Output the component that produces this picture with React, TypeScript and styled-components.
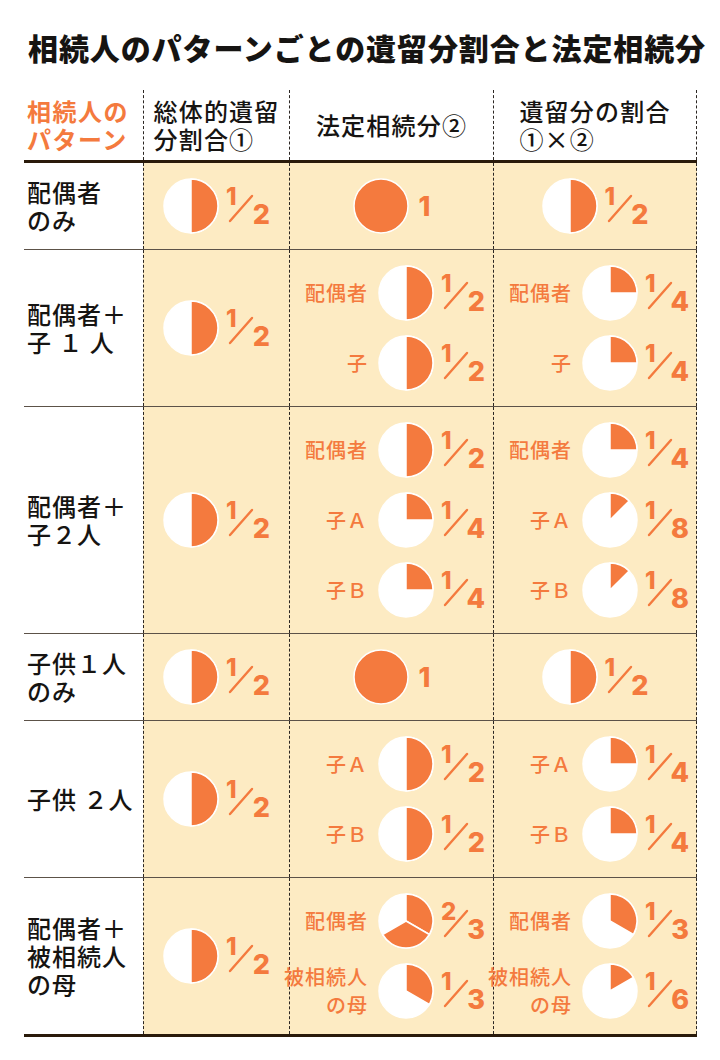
import styled, { createGlobalStyle } from "styled-components";

const ORANGE = "#f47a3e";
const CREAM = "#fdebc3";
const INK = "#161412";
const DASH = "1px dashed #2b2622";

const GlobalStyle = createGlobalStyle`
  body {
    margin: 0;
    background: #ffffff;
    color: ${INK};
    font-family: "Noto Sans CJK JP", "Noto Sans", sans-serif;
  }
`;

const Page = styled.div`
  width: 720px;
  box-sizing: border-box;
  padding: 29px 0 30px 24px;
`;

const Title = styled.h1`
  margin: 0 0 25px 4px;
  font-size: 30px;
  font-weight: 900;
  line-height: 36px;
  letter-spacing: 0.9px;
  white-space: nowrap;
`;

const Table = styled.div`
  width: 673px;
`;

const Row = styled.div<{ $heavy?: boolean }>`
  display: grid;
  grid-template-columns: 119px 146px 204px 204px;
  border-bottom: ${(p) => (p.$heavy ? "3px solid #2a1a0a" : "1px solid #5c5248")};
`;

const NameCell = styled.div`
  display: flex;
  align-items: center;
  padding-left: 3px;
  font-size: 24px;
  line-height: 28px;
  font-weight: 500;
  letter-spacing: 1px;
  white-space: nowrap;
`;

const HeadName = styled(NameCell)`
  color: ${ORANGE};
  font-weight: 700;
  letter-spacing: 1.5px;
`;

const HeadCell = styled.div<{ $edge?: boolean }>`
  box-sizing: border-box;
  height: 70px;
  display: flex;
  align-items: center;
  justify-content: center;
  border-left: ${DASH};
  border-right: ${(p) => (p.$edge ? DASH : "none")};
  font-size: 24px;
  line-height: 28px;
  font-weight: 500;
  letter-spacing: 1.2px;
  white-space: nowrap;
`;

const HeadText = styled.div`
  text-align: left;
`;

const DataCell = styled.div<{ $edge?: boolean; $center?: boolean }>`
  box-sizing: border-box;
  background: ${CREAM};
  border-left: ${DASH};
  border-right: ${(p) => (p.$edge ? DASH : "none")};
  display: flex;
  flex-direction: column;
  justify-content: center;
  align-items: ${(p) => (p.$center ? "center" : "stretch")};
  gap: 14px;
  padding: ${(p) => (p.$center ? "15px 0" : "15px 0 15px 4px")};
`;

const Item = styled.div`
  display: flex;
  align-items: center;
`;

const Who = styled.div`
  flex: none;
  width: 74px;
  margin-right: 10px;
  display: flex;
  flex-direction: column;
  align-items: flex-end;
  color: ${ORANGE};
  font-size: 20px;
  line-height: 28px;
  font-weight: 500;
  letter-spacing: 1px;
  white-space: nowrap;
`;

const PieSvg = styled.svg`
  flex: none;
  display: block;
`;

const Frac = styled.div`
  flex: none;
  display: grid;
  grid-template-columns: 22px 24px;
  grid-template-rows: 20px 23px;
  width: 46px;
  height: 43px;
  margin-left: 5px;
  color: ${ORANGE};
  font-family: Inter, "Noto Sans", sans-serif;
  font-weight: 800;
`;

const Slash = styled.svg`
  grid-area: 1 / 1 / 3 / 3;
`;

const Num = styled.span`
  grid-area: 1 / 1;
  align-self: start;
  padding-left: 2px;
  font-size: 24px;
  line-height: 24px;
`;

const Den = styled.span`
  grid-area: 2 / 2;
  align-self: end;
  justify-self: end;
  font-size: 27px;
  line-height: 27px;
`;

const Whole = styled.span`
  margin-left: 10px;
  color: ${ORANGE};
  font-family: Inter, "Noto Sans", sans-serif;
  font-weight: 800;
  font-size: 27px;
  line-height: 27px;
`;

type Share = { who?: string[]; num: number; den: number; parts?: number };

type Pattern = {
  name: string[];
  legal: Share[];
  reserve: Share[];
};

const patterns: Pattern[] = [
  {
    name: ["配偶者", "のみ"],
    legal: [{ num: 1, den: 1 }],
    reserve: [{ num: 1, den: 2 }],
  },
  {
    name: ["配偶者＋", "子 １ 人"],
    legal: [
      { who: ["配偶者"], num: 1, den: 2 },
      { who: ["子"], num: 1, den: 2 },
    ],
    reserve: [
      { who: ["配偶者"], num: 1, den: 4 },
      { who: ["子"], num: 1, den: 4 },
    ],
  },
  {
    name: ["配偶者＋", "子２人"],
    legal: [
      { who: ["配偶者"], num: 1, den: 2 },
      { who: ["子Ａ"], num: 1, den: 4 },
      { who: ["子Ｂ"], num: 1, den: 4 },
    ],
    reserve: [
      { who: ["配偶者"], num: 1, den: 4 },
      { who: ["子Ａ"], num: 1, den: 8 },
      { who: ["子Ｂ"], num: 1, den: 8 },
    ],
  },
  {
    name: ["子供１人", "のみ"],
    legal: [{ num: 1, den: 1 }],
    reserve: [{ num: 1, den: 2 }],
  },
  {
    name: ["子供 ２人"],
    legal: [
      { who: ["子Ａ"], num: 1, den: 2 },
      { who: ["子Ｂ"], num: 1, den: 2 },
    ],
    reserve: [
      { who: ["子Ａ"], num: 1, den: 4 },
      { who: ["子Ｂ"], num: 1, den: 4 },
    ],
  },
  {
    name: ["配偶者＋", "被相続人", "の母"],
    legal: [
      { who: ["配偶者"], num: 2, den: 3, parts: 2 },
      { who: ["被相続人", "の母"], num: 1, den: 3 },
    ],
    reserve: [
      { who: ["配偶者"], num: 1, den: 3 },
      { who: ["被相続人", "の母"], num: 1, den: 6 },
    ],
  },
];

const point = (t: number, r: number) => {
  const a = t * Math.PI * 2;
  return `${(28 + r * Math.sin(a)).toFixed(2)} ${(28 - r * Math.cos(a)).toFixed(2)}`;
};

const Pie = ({ num, den, parts = 1 }: Share) => {
  const r = 27;
  const total = num / den;
  const step = total / parts;
  const slices = [];
  if (total < 1) {
    for (let i = 0; i < parts; i++) {
      const a0 = i * step;
      const a1 = a0 + step;
      const large = a1 - a0 > 0.5 ? 1 : 0;
      slices.push(
        <path
          key={i}
          d={`M28 28 L${point(a0, r)} A${r} ${r} 0 ${large} 1 ${point(a1, r)} Z`}
          fill={ORANGE}
          stroke="#fff"
          strokeWidth={1.5}
          strokeLinejoin="round"
        />
      );
    }
  }
  return (
    <PieSvg width={56} height={56} viewBox="0 0 56 56">
      <circle cx={28} cy={28} r={r} fill={total >= 1 ? ORANGE : "#fff"} stroke="#fff" strokeWidth={1.5} />
      {slices}
    </PieSvg>
  );
};

const Fraction = ({ num, den }: { num: number; den: number }) => (
  <Frac>
    <Slash width={46} height={43} viewBox="0 0 46 43">
      <line x1={6} y1={36} x2={28} y2={11} stroke={ORANGE} strokeWidth={2.4} strokeLinecap="round" />
    </Slash>
    <Num>{num}</Num>
    <Den>{den}</Den>
  </Frac>
);

const ShareView = ({ share }: { share: Share }) => (
  <Item>
    {share.who && (
      <Who>
        {share.who.map((line) => (
          <span key={line}>{line}</span>
        ))}
      </Who>
    )}
    <Pie {...share} />
    {share.den === 1 ? <Whole>{share.num}</Whole> : <Fraction num={share.num} den={share.den} />}
  </Item>
);

const ShareCell = ({ shares, edge }: { shares: Share[]; edge?: boolean }) => (
  <DataCell $edge={edge} $center={!shares[0].who}>
    {shares.map((s, i) => (
      <ShareView key={i} share={s} />
    ))}
  </DataCell>
);

const App = () => (
  <Page>
    <GlobalStyle />
    <Title>相続人のパターンごとの遺留分割合と法定相続分</Title>
    <Table>
      <Row $heavy>
        <HeadName>
          <div>
            相続人の
            <br />
            パターン
          </div>
        </HeadName>
        <HeadCell>
          <HeadText>
            総体的遺留
            <br />
            分割合①
          </HeadText>
        </HeadCell>
        <HeadCell>
          <HeadText>法定相続分②</HeadText>
        </HeadCell>
        <HeadCell $edge>
          <HeadText>
            遺留分の割合
            <br />
            ①×②
          </HeadText>
        </HeadCell>
      </Row>
      {patterns.map((p, i) => (
        <Row key={i} $heavy={i === patterns.length - 1}>
          <NameCell>
            <div>
              {p.name.map((line, j) => (
                <div key={j}>{line}</div>
              ))}
            </div>
          </NameCell>
          <ShareCell shares={[{ num: 1, den: 2 }]} />
          <ShareCell shares={p.legal} />
          <ShareCell shares={p.reserve} edge />
        </Row>
      ))}
    </Table>
  </Page>
);

export default App;
